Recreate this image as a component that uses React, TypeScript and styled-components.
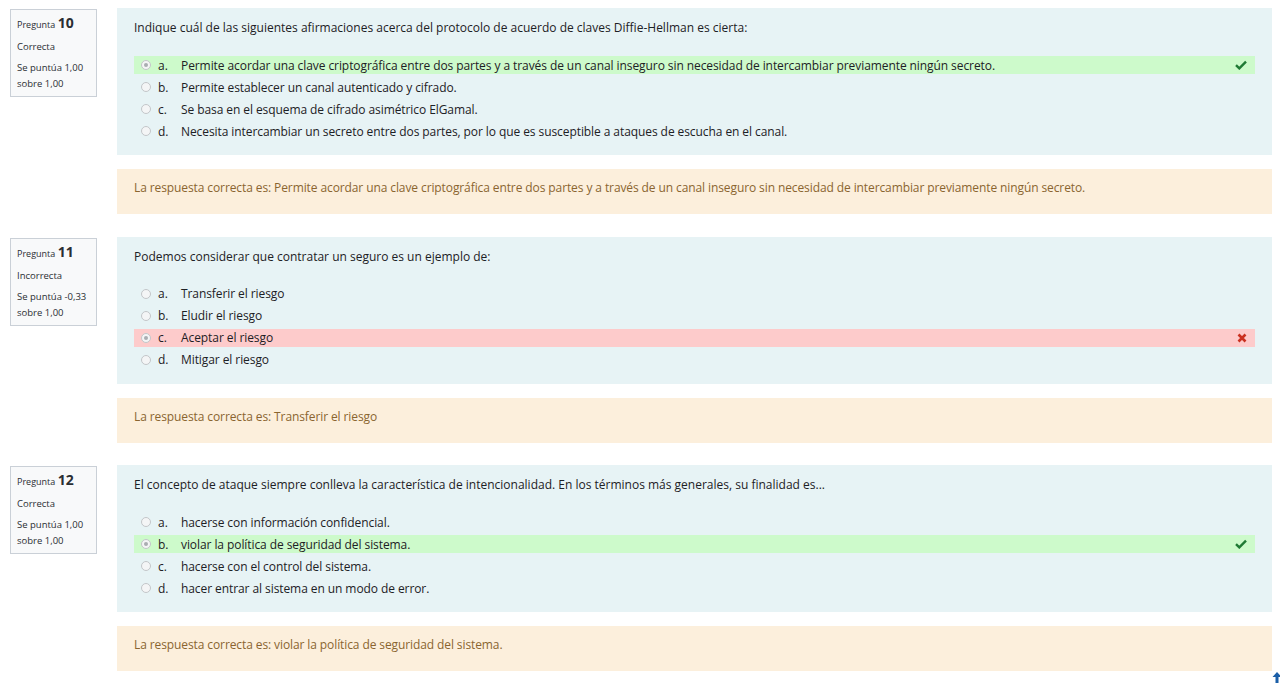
import React from "react";
import styled, { createGlobalStyle } from "styled-components";

const Global = createGlobalStyle`
  html, body { margin: 0; padding: 0; background: #fff; }
  body { font-family: "Open Sans", "Noto Sans", sans-serif; color: #1d2125; }
  * { box-sizing: border-box; }
`;

const Page = styled.div`
  padding: 8px 8px 0 10px;
  height: 684px;
  overflow: hidden;
  position: relative;
`;

const Question = styled.div`
  display: flex;
  align-items: flex-start;
  margin-bottom: 22.5px;
`;

const Info = styled.div`
  width: 87px;
  flex: none;
  margin-top: 1px;
  padding: 5px 6px 4px 6px;
  background: #f8f9fa;
  border: 1px solid #cad0d7;
  font-size: 9.5px;
  line-height: 16px;
  color: #2a2e33;
`;

const QNo = styled.div`
  font-size: 9px;
  margin-bottom: 6px;
  b { font-size: 14px; font-weight: 700; }
`;

const State = styled.div`
  margin-bottom: 5px;
`;

const Content = styled.div`
  margin-left: 20px;
  flex: 1;
`;

const Formulation = styled.div`
  background: #e7f3f5;
  padding: 11px 17px 13px 17px;
  height: 147px;
`;

const QText = styled.div`
  font-size: 12px;
  line-height: 18px;
  margin-bottom: 19px;
`;

const Answers = styled.div`
  display: flex;
  flex-direction: column;
  gap: 4px;
`;

const Row = styled.div<{ $state?: "correct" | "incorrect" }>`
  display: flex;
  align-items: center;
  height: 18px;
  padding-left: 7px;
  padding-right: 8px;
  font-size: 12px;
  background: ${(p) =>
    p.$state === "correct" ? "#cdfacb" : p.$state === "incorrect" ? "#fdcbcb" : "transparent"};
`;

const Radio = styled.span<{ $checked?: boolean }>`
  width: 10px;
  height: 10px;
  border-radius: 50%;
  border: 1px solid #c3c6c9;
  background: #f4f5f6;
  flex: none;
  position: relative;
  &::after {
    content: "";
    display: ${(p) => (p.$checked ? "block" : "none")};
    position: absolute;
    left: 2px;
    top: 2px;
    width: 4px;
    height: 4px;
    border-radius: 50%;
    background: #a9adb1;
  }
`;

const Letter = styled.span`
  width: 30px;
  padding-left: 7px;
  flex: none;
`;

const AnsText = styled.span`
  flex: 1;
  letter-spacing: -0.08px;
`;

const Mark = styled.span`
  flex: none;
  display: flex;
  align-items: center;
`;

const Feedback = styled.div`
  margin-top: 14px;
  background: #fcefdc;
  color: #8a6530;
  font-size: 12px;
  line-height: 18px;
  letter-spacing: -0.1px;
  padding: 10px 17px 17px 17px;
  height: 45px;
`;

const TopArrow = styled.div`
  position: absolute;
  right: -3px;
  bottom: -4px;
`;

const Check = () => (
  <svg width="12" height="10" viewBox="0 0 12 10">
    <path d="M1 5.2 L4.3 8.4 L11 1.6" fill="none" stroke="#1f7a34" strokeWidth="2.4" strokeLinejoin="miter" />
  </svg>
);

const Cross = () => (
  <svg width="10" height="10" viewBox="0 0 10 10">
    <path d="M1.5 1.5 L8.5 8.5 M8.5 1.5 L1.5 8.5" stroke="#ca3120" strokeWidth="2.6" />
  </svg>
);

type Opt = { letter: string; text: string; checked?: boolean; state?: "correct" | "incorrect" };

type Q = {
  no: number;
  status: string;
  score: string;
  text: string;
  options: Opt[];
  feedback: string;
};

const questions: Q[] = [
  {
    no: 10,
    status: "Correcta",
    score: "Se puntúa 1,00",
    text: "Indique cuál de las siguientes afirmaciones acerca del protocolo de acuerdo de claves Diffie-Hellman es cierta:",
    options: [
      {
        letter: "a.",
        text: "Permite acordar una clave criptográfica entre dos partes y a través de un canal inseguro sin necesidad de intercambiar previamente ningún secreto.",
        checked: true,
        state: "correct",
      },
      { letter: "b.", text: "Permite establecer un canal autenticado y cifrado." },
      { letter: "c.", text: "Se basa en el esquema de cifrado asimétrico ElGamal." },
      {
        letter: "d.",
        text: "Necesita intercambiar un secreto entre dos partes, por lo que es susceptible a ataques de escucha en el canal.",
      },
    ],
    feedback:
      "La respuesta correcta es: Permite acordar una clave criptográfica entre dos partes y a través de un canal inseguro sin necesidad de intercambiar previamente ningún secreto.",
  },
  {
    no: 11,
    status: "Incorrecta",
    score: "Se puntúa -0,33",
    text: "Podemos considerar que contratar un seguro es un ejemplo de:",
    options: [
      { letter: "a.", text: "Transferir el riesgo" },
      { letter: "b.", text: "Eludir el riesgo" },
      { letter: "c.", text: "Aceptar el riesgo", checked: true, state: "incorrect" },
      { letter: "d.", text: "Mitigar el riesgo" },
    ],
    feedback: "La respuesta correcta es: Transferir el riesgo",
  },
  {
    no: 12,
    status: "Correcta",
    score: "Se puntúa 1,00",
    text: "El concepto de ataque siempre conlleva la característica de intencionalidad. En los términos más generales, su finalidad es...",
    options: [
      { letter: "a.", text: "hacerse con información confidencial." },
      { letter: "b.", text: "violar la política de seguridad del sistema.", checked: true, state: "correct" },
      { letter: "c.", text: "hacerse con el control del sistema." },
      { letter: "d.", text: "hacer entrar al sistema en un modo de error." },
    ],
    feedback: "La respuesta correcta es: violar la política de seguridad del sistema.",
  },
];

export default function App() {
  return (
    <>
      <Global />
      <Page>
        {questions.map((q) => (
          <Question key={q.no}>
            <Info>
              <QNo>
                Pregunta <b>{q.no}</b>
              </QNo>
              <State>{q.status}</State>
              <div>{q.score}</div>
              <div>sobre 1,00</div>
            </Info>
            <Content>
              <Formulation>
                <QText>{q.text}</QText>
                <Answers>
                  {q.options.map((o) => (
                    <Row key={o.letter} $state={o.state}>
                      <Radio $checked={o.checked} />
                      <Letter>{o.letter}</Letter>
                      <AnsText>{o.text}</AnsText>
                      {o.state && <Mark>{o.state === "correct" ? <Check /> : <Cross />}</Mark>}
                    </Row>
                  ))}
                </Answers>
              </Formulation>
              <Feedback>{q.feedback}</Feedback>
            </Content>
          </Question>
        ))}
        <TopArrow>
          <svg width="12" height="12" viewBox="0 0 12 12">
            <path d="M6 1 L1.5 6 H4.5 V12 H7.5 V6 H10.5 Z" fill="#1b5fa8" />
          </svg>
        </TopArrow>
      </Page>
    </>
  );
}
